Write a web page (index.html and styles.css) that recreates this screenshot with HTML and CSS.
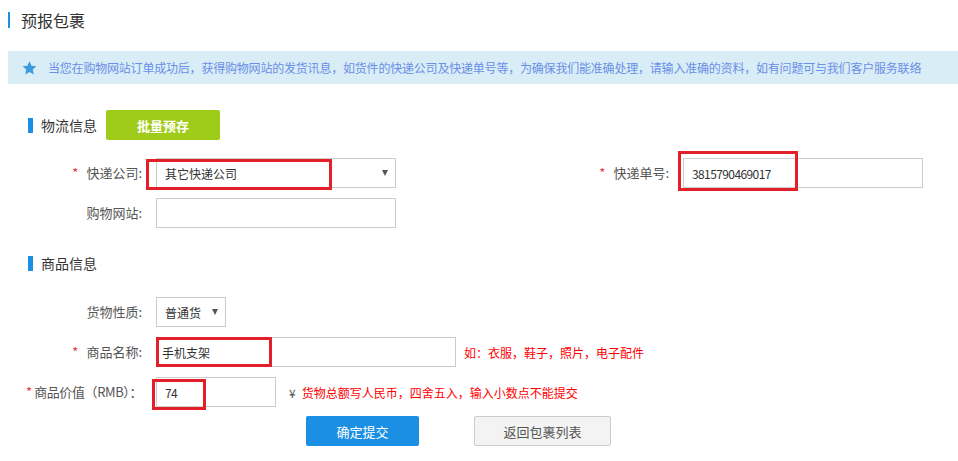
FILE: index.html
```html
<!DOCTYPE html>
<html lang="zh-CN">
  <head>
    <meta charset="UTF-8">
    <meta name="viewport" content="width=device-width, initial-scale=1.0">
    <title>预报包裹</title>
    <link rel="stylesheet" href="styles.css">
  </head>
  <body>
    <div class="page-title">预报包裹</div>

    <div class="notice">
      <svg class="notice-star" width="15" height="14" viewBox="0 0 24 23">
        <path d="M12 0.5l3.4 7.3 7.9 0.9-5.9 5.4 1.6 7.9L12 18l-7 4 1.6-7.9L0.7 8.7l7.9-0.9z" fill="#3a9be0"/>
      </svg>
      <span>当您在购物网站订单成功后，获得购物网站的发货讯息，如货件的快递公司及快递单号等，为确保我们能准确处理，请输入准确的资料，如有问题可与我们客户服务联络</span>
    </div>

    <div class="section-head">
      <span class="section-name">物流信息</span>
      <button class="btn btn-batch">批量预存</button>
    </div>

    <div class="form-row">
      <div class="field field-left">
        <label class="field-label"><span class="req req-wide">*</span>快递公司:</label>
        <div class="mark-wrap">
          <div class="fake-select select-wide"><span>其它快递公司</span><i class="caret"></i></div>
          <span class="mark mark-company"></span>
        </div>
      </div>
      <div class="field">
        <label class="field-label"><span class="req req-wide">*</span>快递单号:</label>
        <div class="mark-wrap">
          <input class="text-input input-wide input-number" type="text" value="3815790469017" readonly>
          <span class="mark mark-tracking"></span>
        </div>
      </div>
    </div>

    <div class="form-row">
      <div class="field field-left">
        <label class="field-label">购物网站:</label>
        <input class="text-input input-wide" type="text" value="" readonly>
      </div>
    </div>

    <div class="section-head section-goods">
      <span class="section-name">商品信息</span>
    </div>

    <div class="form-row">
      <div class="field">
        <label class="field-label">货物性质:</label>
        <div class="fake-select select-small"><span>普通货</span><i class="caret"></i></div>
      </div>
    </div>

    <div class="form-row">
      <div class="field">
        <label class="field-label"><span class="req req-wide">*</span>商品名称:</label>
        <div class="mark-wrap">
          <input class="text-input input-name" type="text" value="手机支架" readonly>
          <span class="mark mark-name"></span>
        </div>
        <span class="hint">如：衣服，鞋子，照片，电子配件</span>
      </div>
    </div>

    <div class="form-row">
      <div class="field">
        <label class="field-label label-tight"><span class="req">*</span> 商品价值（RMB）：</label>
        <div class="mark-wrap">
          <input class="text-input input-price input-number" type="text" value="74" readonly>
          <span class="mark mark-price"></span>
        </div>
        <span class="currency">¥</span>
        <span class="hint hint-price">货物总额写人民币，四舍五入，输入小数点不能提交</span>
      </div>
    </div>

    <div class="actions">
      <button class="btn btn-submit">确定提交</button>
      <button class="btn btn-back">返回包裹列表</button>
    </div>
  </body>
</html>
```

FILE: styles.css
```css
:root {
  --blue: #1a8fe3;
  --text-main: #333;
  --text-label: #555;
  --border: #ccc;
  --mark-red: #e3202a;
  --hint-red: #f00;
}

body {
  margin: 0;
  font-family: "Noto Sans CJK SC", "Liberation Sans", sans-serif;
  font-size: 13px;
  color: var(--text-main);
  background: #fff;
}

.page-title {
  margin: 12px 0 0 8px;
  padding-left: 11px;
  border-left: 2px solid var(--blue);
  height: 16px;
  line-height: 16px;
  font-size: 16px;
  color: var(--text-main);
}

.notice {
  display: flex;
  align-items: center;
  margin: 23px 0 0 8px;
  height: 33px;
  padding-left: 14px;
  background: #d9edf7;
  color: #6a8fe6;
  font-size: 12px;
  letter-spacing: -0.2px;
  white-space: nowrap;
  overflow: hidden;
}

.notice-star {
  flex: none;
  margin-right: 11px;
}

.section-head {
  display: flex;
  align-items: center;
  height: 30px;
  margin: 26px 0 18px 28px;
}

.section-goods {
  margin-top: 20px;
  margin-bottom: 19px;
}

.section-name {
  border-left: 5px solid var(--blue);
  padding-left: 8px;
  height: 15px;
  line-height: 15px;
  font-size: 14px;
  color: var(--text-main);
}

.btn {
  font-family: inherit;
  font-size: 13px;
  height: 30px;
  border: 0;
  border-radius: 2px;
  padding: 0;
  cursor: pointer;
}

.btn-batch {
  margin-left: 9px;
  width: 114px;
  background: #9fcc18;
  color: #fff;
  font-weight: bold;
}

.form-row {
  display: flex;
  height: 30px;
  margin-bottom: 10px;
}

.field {
  display: flex;
  align-items: center;
}

.field-left {
  width: 527px;
}

.field-label {
  width: 142px;
  padding-right: 14px;
  text-align: right;
  line-height: 30px;
  color: var(--text-label);
  white-space: nowrap;
}

.label-tight {
  letter-spacing: -0.4px;
}

.req {
  color: #e8383d;
}

.req-wide {
  margin-right: 8px;
}

.text-input,
.fake-select {
  box-sizing: border-box;
  height: 30px;
  border: 1px solid var(--border);
  background: #fff;
  font-family: inherit;
  font-size: 12px;
  color: var(--text-main);
  padding: 0 8px;
  outline: none;
}

.input-number {
  letter-spacing: -0.6px;
}

.fake-select {
  display: flex;
  align-items: center;
  justify-content: space-between;
  padding-right: 7px;
}

.caret {
  width: 0;
  height: 0;
  border-left: 3.5px solid transparent;
  border-right: 3.5px solid transparent;
  border-top: 6px solid #555;
}

.input-wide,
.select-wide { width: 240px; }
.select-small { width: 70px; }
.input-name { width: 300px; padding-left: 5px; }
.input-price { width: 120px; }

.mark-wrap {
  position: relative;
}

/* red highlight frames drawn over the fields */
.mark {
  position: absolute;
  box-sizing: border-box;
  border: 3px solid var(--mark-red);
  pointer-events: none;
}

.mark-company { left: -10px; top: 1px; width: 186px; height: 31px; }
.mark-tracking { left: -5px; top: -7px; width: 120px; height: 40px; }
.mark-name { left: 0; top: 0; width: 116px; height: 30px; }
.mark-price { left: -4px; top: 2px; width: 54px; height: 31px; }

.hint {
  margin-left: 8px;
  font-size: 12px;
  color: var(--hint-red);
}

.currency {
  margin-left: 13px;
  font-size: 12px;
  color: var(--text-label);
}

.hint-price {
  margin-left: 6px;
}

.actions {
  display: flex;
  gap: 55px;
  padding-left: 306px;
  margin-top: -1px;
}

.btn-submit {
  width: 113px;
  background: var(--blue);
  color: #fff;
}

.btn-back {
  width: 137px;
  background: #f3f3f3;
  border: 1px solid var(--border);
  color: var(--text-label);
}
```
